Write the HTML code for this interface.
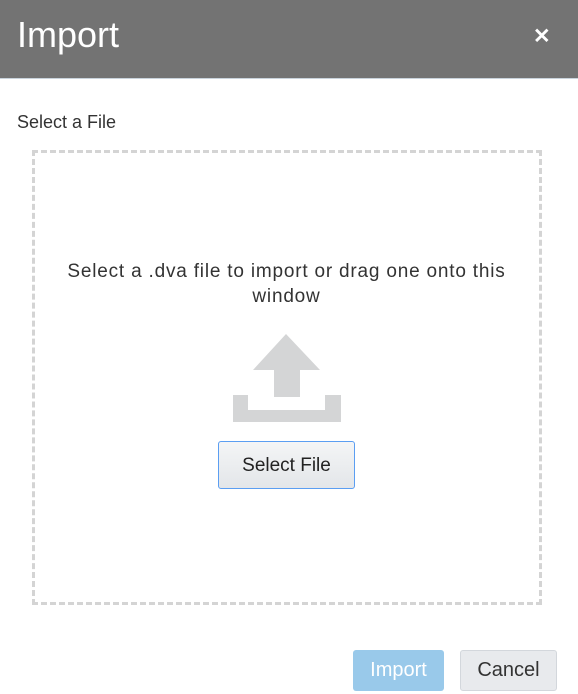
<!DOCTYPE html>
<html><head><style>
body{margin:0;width:578px;height:694px;background:#fff;font-family:"Liberation Sans",sans-serif;position:relative;overflow:hidden}
.hdr{position:absolute;left:0;top:0;width:578px;height:78px;background:#737373;border-bottom:1px solid #c9d3dc}
.hdr .t{position:absolute;left:17px;top:14px;font-size:36px;color:#fff}
.hdr .x{position:absolute;left:533px;top:24px;font-size:21px;color:#fff;font-weight:bold}
.lbl{position:absolute;left:17px;top:112px;font-size:18px;color:#333}
.box{position:absolute;left:32px;top:150px;width:504px;height:449px;border:3px dashed #d4d4d4}
.msg{position:absolute;left:20px;top:259px;width:533px;text-align:center;font-size:19px;letter-spacing:0.8px;line-height:25px;color:#333}
.sel{position:absolute;left:218px;top:441px;width:135px;height:46px;border:1px solid #5b9ef2;border-radius:3px;background:linear-gradient(#f4f5f6,#e3e6e9);font-size:19px;color:#222;text-align:center;line-height:48px}
.btn{position:absolute;top:650px;height:41px;border-radius:3px;font-size:20px;text-align:center;line-height:41px}
.imp{left:353px;width:91px;background:#99c9ea;color:#fff}
.can{left:460px;width:95px;background:#e8eaed;border:1px solid #d3d7dc;height:39px;line-height:39px;color:#333}
</style></head><body>
<div class="hdr"><div class="t">Import</div><div class="x">✕</div></div>
<div class="lbl">Select a File</div>
<div class="box"></div>
<div class="msg">Select a .dva file to import or drag one onto this<br>window</div>
<svg style="position:absolute;left:0;top:0" width="578" height="694">
<polygon points="286,334 320,370 300,370 300,397 274,397 274,370 253,370" fill="#d4d5d6"/>
<polygon points="233,395 248,395 248,410 325,410 325,395 341,395 341,422 233,422" fill="#d4d5d6"/>
</svg>
<div class="sel">Select File</div>
<div class="btn imp">Import</div>
<div class="btn can">Cancel</div>
</body></html>
